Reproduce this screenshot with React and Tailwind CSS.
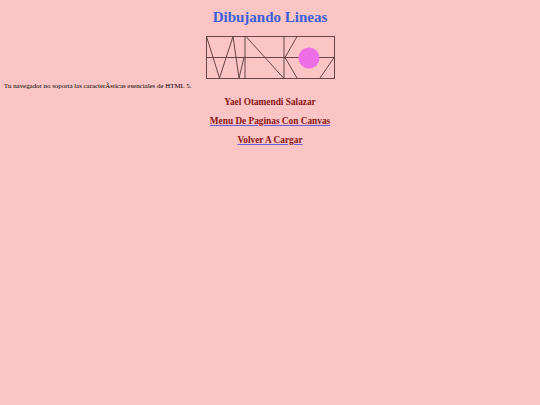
export default function App() {
    return (
        <div className="min-h-screen bg-[#fbc5c5] font-['Liberation_Serif',serif] text-black">
            {/* Title */}
            <h1 className="pt-[8px] text-center text-[15px] leading-[18px] font-bold text-[#3a5fd8]">
                Dibujando Lineas
            </h1>

            {/* Canvas drawing */}
            <div className="mt-[10px] flex justify-center">
                <svg width="129" height="43" viewBox="0 0 129 43" className="block">
                    <g stroke="#553838" strokeWidth="0.9" fill="none">
                        <rect x="0.5" y="0.5" width="128" height="42" />
                        <line x1="0" y1="21.5" x2="129" y2="21.5" />
                        <line x1="39" y1="0" x2="39" y2="43" />
                        <line x1="78" y1="0" x2="78" y2="43" />
                        <polyline points="0.5,0.5 13.5,42 27,0.5 33,42 38,21.5" />
                        <line x1="40" y1="0.5" x2="77.5" y2="42" />
                        <line x1="79" y1="21.5" x2="91" y2="0.5" />
                        <line x1="79" y1="21.5" x2="91" y2="42" />
                        <line x1="128" y1="21.5" x2="114" y2="42" />
                    </g>
                    <circle cx="103" cy="22" r="10.5" fill="#ee6ee8" />
                </svg>
            </div>

            <p className="mt-[2px] pl-[4px] text-[6.9px] leading-[9px]">
                Tu navegador no soporta las caracterÃsticas esenciales de HTML 5.
            </p>

            <div className="flex flex-col items-center text-[9.3px] leading-[12px] font-bold text-[#8b1414]">
                <p className="mt-[6px]">Yael Otamendi Salazar</p>
                <a
                    href="#"
                    className="mt-[7px] underline decoration-[#6a5bd8] underline-offset-[1px]"
                >
                    Menu De Paginas Con Canvas
                </a>
                <a
                    href="#"
                    className="mt-[7px] underline decoration-[#6a5bd8] underline-offset-[1px]"
                >
                    Volver A Cargar
                </a>
            </div>
        </div>
    );
}
